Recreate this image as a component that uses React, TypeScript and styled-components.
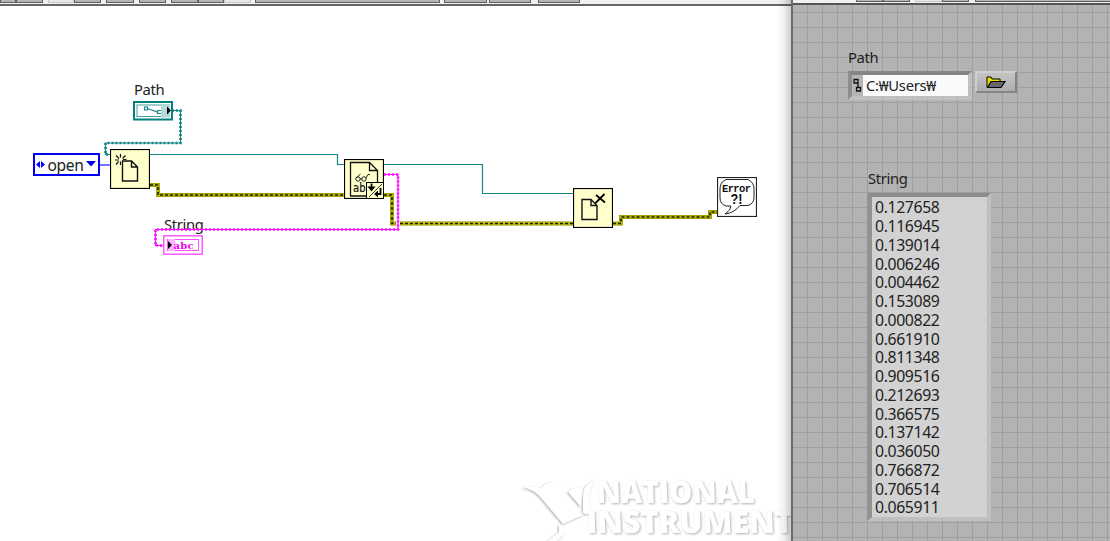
import React from 'react';
import styled, { createGlobalStyle } from 'styled-components';

const Global = createGlobalStyle`
  * { box-sizing: border-box; }
  body { margin: 0; overflow: hidden; background: #fff; }
`;

const Screen = styled.div`
  display: flex;
  width: 1110px;
  height: 541px;
  font-family: 'Noto Sans', 'Noto Sans CJK KR', sans-serif;
  font-size: 15px;
  color: #222;
`;

const DiagramWindow = styled.section`
  display: flex;
  flex-direction: column;
  flex: 0 0 791px;
  position: relative;
  overflow: hidden;
`;

const WindowShade = styled.div`
  position: absolute;
  inset: 0 0 0 auto;
  width: 14px;
  background: linear-gradient(to right, rgba(0, 0, 0, 0), rgba(0, 0, 0, 0.06) 50%, rgba(0, 0, 0, 0.2));
`;

const PanelWindow = styled.section`
  display: flex;
  flex-direction: column;
  flex: 1;
  min-width: 0;
  border-left: 2px solid #6b6b6b;
`;

const Toolbar = styled.div<{ $height: number; $line: string }>`
  display: flex;
  flex: 0 0 ${(p) => p.$height}px;
  height: ${(p) => p.$height}px;
  background: #f0f0f0;
  border-bottom: 2px solid ${(p) => p.$line};
`;

const ToolButton = styled.div<{ $w: number; $gap?: number; $off?: boolean; $h: number }>`
  flex: 0 0 ${(p) => p.$w}px;
  height: ${(p) => p.$h}px;
  margin-left: ${(p) => p.$gap ?? 0}px;
  background: ${(p) => (p.$off ? '#e8e8e8' : '#b4b4b4')};
  border: solid ${(p) => (p.$off ? '#c8c8c8' : '#606060')};
  border-width: 0 1px 1px 1px;
`;

const Canvas = styled.div`
  position: relative;
  flex: 1;
`;

const Wires = styled.svg`
  position: absolute;
  left: 0;
  top: -6px;
`;

const Placed = styled.div<{ $x: number; $y: number }>`
  position: absolute;
  left: ${(p) => p.$x}px;
  top: ${(p) => p.$y - 6}px;
  display: flex;
`;

const Label = styled.span<{ $size?: number }>`
  font-size: ${(p) => p.$size ?? 14.8}px;
  letter-spacing: -0.35px;
  line-height: 20px;
  white-space: nowrap;
`;

const EnumConstant = styled.div`
  display: flex;
  align-items: center;
  justify-content: space-between;
  width: 67px;
  height: 23px;
  padding: 0 2px 0 1px;
  border: 2px solid #0000f8;
  background: #fff;
`;

const FrontPanel = styled.div`
  flex: 1;
  display: flex;
  flex-direction: column;
  align-items: flex-start;
  background-color: #b3b3b3;
  background-image: linear-gradient(to right, #9f9f9f 1px, transparent 1px),
    linear-gradient(to bottom, #9f9f9f 1px, transparent 1px);
  background-size: 15px 15px;
  background-position: 14px 7px;
  padding: 42px 0 0 55px;
`;

const PathRow = styled.div`
  display: flex;
  align-items: flex-start;
  gap: 3px;
  margin: 4px 0 68px;
`;

const PathFrame = styled.div`
  display: flex;
  width: 124px;
  height: 29px;
  border: 4px solid;
  border-color: #858585 rgba(196, 196, 196, 0.8) rgba(196, 196, 196, 0.8) #8e8e8e;
  background: #b6b6b6;
  background-clip: padding-box;
`;

const PathText = styled.div`
  flex: 1;
  background: #fafafa;
  padding-left: 3px;
  font-size: 14.8px;
  letter-spacing: -0.3px;
  line-height: 21px;
  height: 21px;
  white-space: nowrap;
`;

const BrowseButton = styled.div`
  display: flex;
  justify-content: center;
  width: 42px;
  height: 22px;
  padding-top: 2px;
  border: 2px solid;
  border-color: #cfcfcf #808080 #858585 #cecece;
  background: linear-gradient(#c4c4c4, #adadad);
`;

const IndicatorLabel = styled.div`
  display: flex;
  height: 20px;
  margin-left: 20px;
`;

const StringIndicator = styled.div`
  width: 124px;
  height: 328px;
  margin: 5px 0 0 19px;
  border: solid;
  border-width: 4px 4px 4px 5px;
  border-color: #8c8c8c rgba(196, 196, 196, 0.8) rgba(196, 196, 196, 0.8) #929292;
  background: #d2d2d2;
  background-clip: padding-box;
  padding: 1.3px 0 0 3px;
  font-size: 15.8px;
  letter-spacing: -0.38px;
  line-height: 18.75px;
`;

const TEAL = '#148686';
const VALUES = [
  '0.127658', '0.116945', '0.139014', '0.006246', '0.004462', '0.153089',
  '0.000822', '0.661910', '0.811348', '0.909516', '0.212693', '0.366575',
  '0.137142', '0.036050', '0.766872', '0.706514', '0.065911',
];

const ErrorWire = ({ d }: { d: string }) => (
  <g fill="none">
    <path d={d} stroke="#8c8c00" strokeWidth="4" />
    <path d={d} stroke="#bcbc00" strokeWidth="3" />
    <path d={d} stroke="#1c1c00" strokeWidth="1.6" strokeDasharray="3 2" />
  </g>
);

const RopeWire = ({ d, color }: { d: string; color: string }) => (
  <g fill="none" stroke={color}>
    <path d={d} strokeWidth="1.2" />
    <path d={d} strokeWidth="2.6" strokeDasharray="2 2" />
  </g>
);

const FileSheet = ({ x, y }: { x: number; y: number }) => (
  <path
    transform={`translate(${x} ${y})`}
    d="M0 0h9l6 6v14H0zM9 0v6h6"
    fill="none"
    stroke="#111"
    strokeWidth="1.400"
  />
);

const OpenFileNode = () => (
  <svg width="40" height="40">
    <rect x=".5" y=".5" width="39" height="39" fill="#ffffcc" stroke="#000" strokeWidth="1.2" />
    <FileSheet x={12.5} y={12} />
    <path d="M10.500 5v3.500M6 6.500l3 3M15.500 6.500l-3 3M5 11h4M13 10.500h3.500M8.500 12.500 6 15.500M10.500 12.500v3.500" stroke="#111" strokeWidth="1.2" fill="none" />
  </svg>
);

const ReadTextNode = () => (
  <svg width="40" height="40">
    <rect x=".5" y=".5" width="39" height="39" fill="#ffffcc" stroke="#000" strokeWidth="1.2" />
    <path d="M6.500 3.500h19l8 8v25.500h-27zM25.500 3.500v8h8" fill="none" stroke="#111" strokeWidth="1.3" />
    <g fill="none" stroke="#222">
      <circle cx="14" cy="20" r="2.200" />
      <circle cx="20" cy="20" r="2.200" />
      <path d="M12 19l4.500-4M22 19l2-3.500h2M16 20h2" />
    </g>
    <text x="9" y="33" fontFamily="DejaVu Sans" fontSize="11.500" textLength="12.5" lengthAdjust="spacingAndGlyphs" fill="#111" stroke="#111" strokeWidth=".2">ab</text>
    <rect x="22.500" y="23.500" width="17" height="16" fill="#ffffcc" stroke="#000" />
    <path d="M25 38 38 25" stroke="#333" />
    <path d="M27.500 24.500v4" stroke="#000" strokeWidth="1.800" />
    <path d="M23.500 27.500h8l-4 5z" />
    <path d="M36.500 29v6H33" fill="none" stroke="#000" strokeWidth="1.800" />
    <path d="M34 31.500v7L30 35z" />
  </svg>
);

const CloseFileNode = () => (
  <svg width="40" height="40">
    <rect x=".5" y=".5" width="39" height="39" fill="#ffffcc" stroke="#000" strokeWidth="1.2" />
    <FileSheet x={9} y={11.5} />
    <path d="M23 7l9 7.500M31.500 6l-9 9" stroke="#000" strokeWidth="1.800" />
  </svg>
);

const ErrorNode = () => (
  <svg width="40" height="40">
    <rect x=".5" y=".5" width="39" height="39" fill="#fff" stroke="#222" strokeWidth="1.2" />
    <path d="M9 2.500h22q6 3 6 9v9q0 6-6 8H23Q17 36 8 37q6-4 6-8H9q-6-2-6-8v-9q0-7 6-9.500z" fill="#fff" stroke="#222" />
    <text x="5" y="14.500" fontFamily="Liberation Mono" fontWeight="bold" fontSize="10.500" textLength="29" fill="#111">Error</text>
    <text x="13.500" y="27" fontFamily="Liberation Sans" fontWeight="bold" fontSize="14" textLength="12" lengthAdjust="spacingAndGlyphs" fill="#111">?!</text>
  </svg>
);

const PathTerminal = () => (
  <svg width="40" height="20">
    <rect x="1" y="1" width="38" height="17.500" fill="#fff" stroke="#008080" strokeWidth="2" />
    <rect x="4" y="4" width="32" height="11.500" fill="#fff" stroke="#46a0a0" />
    <path d="M28 3h9v13.500h-9z" fill="#b3d9d9" />
    <path d="M11.500 6h3v3h-3zM15 8l4 1 5 2M28 9.500h-3.500v3H28" fill="none" stroke={TEAL} strokeWidth="1.2" />
    <path d="M34 5.500v8l4-4z" fill="#000" />
  </svg>
);

const StringTerminal = () => (
  <svg width="40" height="20">
    <rect x=".8" y=".8" width="38.400" height="18.400" fill="#fff" stroke="#ff40ff" strokeWidth="1.300" />
    <rect x="4.500" y="4.500" width="31" height="11" fill="#fff" stroke="#ff50ff" />
    <path d="M5 4h7v12H5z" fill="#ffb3ff" />
    <text x="10.500" y="13.800" fontFamily="DejaVu Serif" fontWeight="bold" fontSize="10" textLength="20" fill="#f000f0">abc</text>
    <path d="M5 6v8l4-4z" fill="#000" />
  </svg>
);

const Watermark = () => (
  <g fill="#fff">
    <g style={{ filter: 'drop-shadow(-1px 1px 1px rgba(0,0,0,.3))' }}>
      <path d="M523 487q12 3 19 12l21 25 20-9-28-34q-9 1-14 7-8-3-18-1z" />
      <path d="M568 492q5-6 15-3l-2 18zM595 480q-12 4-12 15v18q5 3 8-1-5-18 4-32zM559 524v8l-15 12h10l10-10v-7z" />
    </g>
    <g
      style={{ filter: 'drop-shadow(1px 1px 1px rgba(0,0,0,.3))' }}
      fontFamily="Open Sans"
      fontWeight="800"
      fontSize="31"
    >
      <text transform="translate(597 503) skewX(2)" textLength="158" lengthAdjust="spacingAndGlyphs">NATIONAL</text>
      <text transform="translate(587 533) skewX(2)" textLength="224" lengthAdjust="spacingAndGlyphs">INSTRUMENTS</text>
    </g>
  </g>
);

export default function App() {
  return (
    <>
      <Global />
      <Screen>
        <DiagramWindow>
          <Toolbar $height={6} $line="#666">
            <ToolButton $h={3} $w={16} />
            <ToolButton $h={3} $w={27} />
            <ToolButton $h={3} $w={26} $gap={5} $off />
            <ToolButton $h={3} $w={27} />
            <ToolButton $h={3} $w={28} $gap={5} />
            <ToolButton $h={3} $w={27} $gap={5} />
            <ToolButton $h={3} $w={27} $gap={5} />
            <ToolButton $h={3} $w={26} />
            <ToolButton $h={3} $w={27} $off />
            <ToolButton $h={3} $w={185} $gap={4} />
            <ToolButton $h={3} $w={43} $gap={4} />
            <ToolButton $h={3} $w={42} $gap={2} />
            <ToolButton $h={3} $w={42} $gap={7} />
          </Toolbar>
          <Canvas>
            <Wires width="791" height="541">
              <Watermark />
              <RopeWire color={TEAL} d="M172 110.500H180.500V143H105.500V154.500H110" />
              <path d="M150 154.500H337.500V164.500H344M384 164.500H482.500V193.500H573" fill="none" stroke={TEAL} strokeWidth="1.2" />
              <path d="M100 165H110" stroke="#4444ff" strokeWidth="1.500" />
              <ErrorWire d="M150 185H158V195H344" />
              <ErrorWire d="M384 195H392V223.500H396" />
              <ErrorWire d="M400 223.500H573" />
              <ErrorWire d="M613 223.500H621V217H710V212H717" />
            </Wires>
            <Placed $x={134} $y={79}><Label>Path</Label></Placed>
            <Placed $x={133} $y={101}><PathTerminal /></Placed>
            <Placed $x={33} $y={153}>
              <EnumConstant>
                <svg width="9" height="9"><path d="M4 1v7L0 4.500zM5 1v7l4-3.500z" fill="#00f" /></svg>
                <Label $size={15.6}>open</Label>
                <svg width="10" height="7"><path d="M0 0h10L5 5.500z" fill="#0000e0" /></svg>
              </EnumConstant>
            </Placed>
            <Placed $x={110} $y={149}><OpenFileNode /></Placed>
            <Placed $x={344} $y={159}><ReadTextNode /></Placed>
            <Placed $x={573} $y={188}><CloseFileNode /></Placed>
            <Placed $x={717} $y={177}><ErrorNode /></Placed>
            <Placed $x={164} $y={214}><Label>String</Label></Placed>
            <Placed $x={163} $y={235}><StringTerminal /></Placed>
            <Wires width="791" height="541">
              <RopeWire color="#ff10ff" d="M384 174.500H398V229.500H155.500V245.500H163" />
            </Wires>
          </Canvas>
          <WindowShade />
        </DiagramWindow>
        <PanelWindow>
          <Toolbar $height={5} $line="#555">
            <ToolButton $h={2} $w={27} $gap={63} />
            <ToolButton $h={2} $w={27} />
            <ToolButton $h={2} $w={27} $gap={5} $off />
            <ToolButton $h={2} $w={27} />
            <ToolButton $h={2} $w={140} $gap={6} />
          </Toolbar>
          <FrontPanel>
            <Label>Path</Label>
            <PathRow>
              <PathFrame>
                <svg width="11" height="21">
                  <path d="M2 4.500h4v3.500H2zM6 8v4.500M4.500 12.500h4v3.500h-4z" fill="none" stroke="#111" strokeWidth="1.300" />
                </svg>
                <PathText>C:₩Users₩</PathText>
              </PathFrame>
              <BrowseButton>
                <svg width="22" height="14">
                  <path d="M2 12V2h4l1 2h8v3" fill="#e8e000" stroke="#000" />
                  <path d="M2.500 12.500 6 6.500h14l-4 6z" fill="#666" stroke="#000" strokeWidth="1.200" />
                </svg>
              </BrowseButton>
            </PathRow>
            <IndicatorLabel>
              <Label>String</Label>
            </IndicatorLabel>
            <StringIndicator>
              {VALUES.map((v) => (
                <div key={v}>{v}</div>
              ))}
            </StringIndicator>
          </FrontPanel>
        </PanelWindow>
      </Screen>
    </>
  );
}
